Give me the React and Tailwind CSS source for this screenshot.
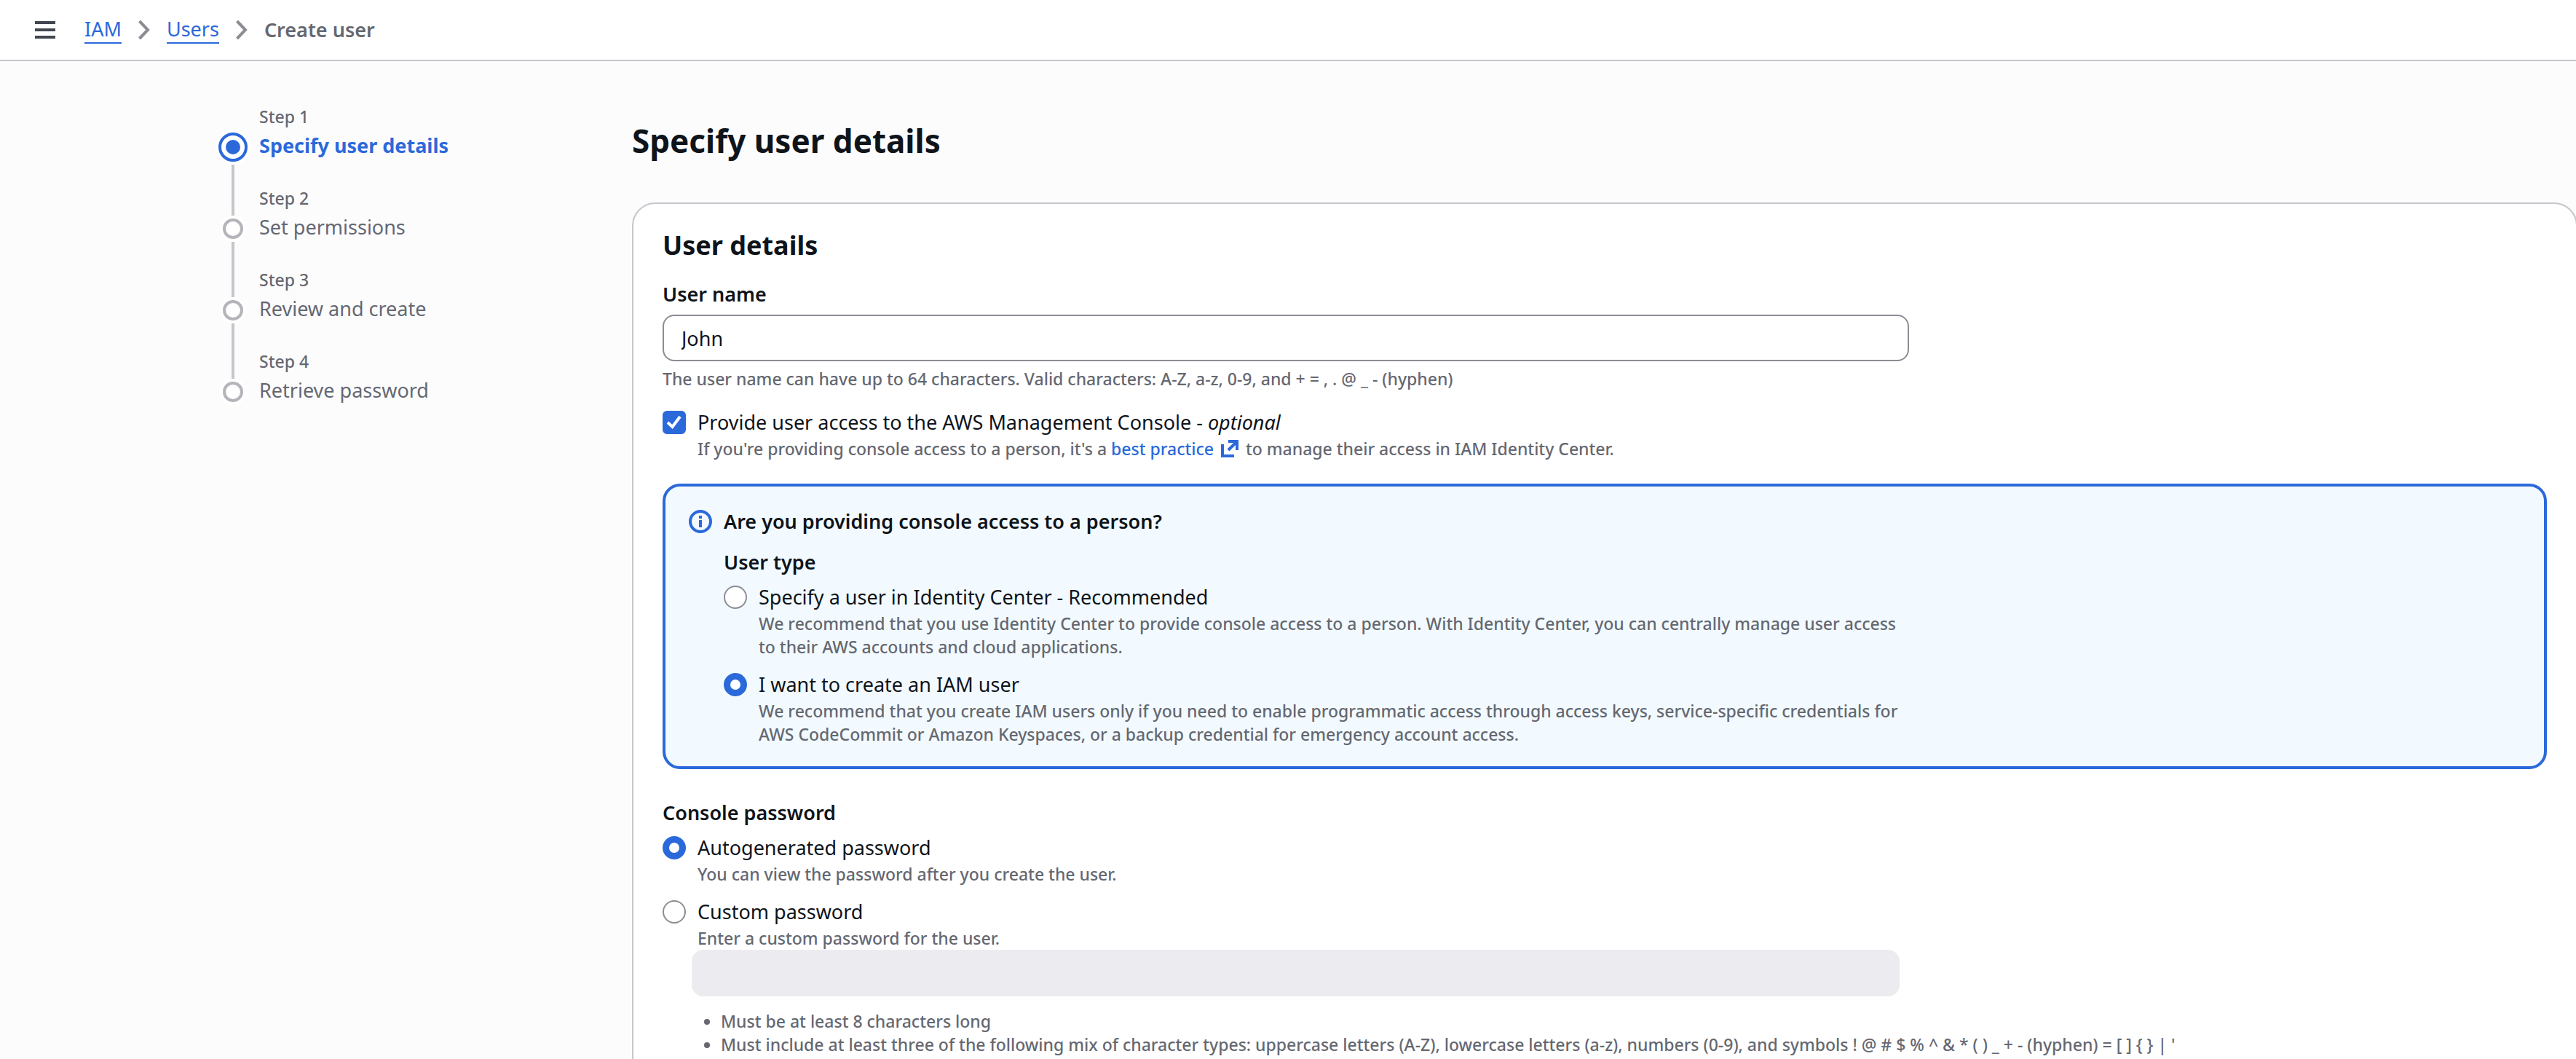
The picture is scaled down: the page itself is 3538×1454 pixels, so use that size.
import { useState } from 'react';

const steps = ['Specify user details', 'Set permissions', 'Review and create', 'Retrieve password'];

function Chevron() {
  return (
    <svg aria-hidden="true" viewBox="0 0 16 28" className="h-7 w-4" fill="none" stroke="#8c8c94" strokeWidth="4">
      <path d="M1.500 2 L13 14 L1.500 26" />
    </svg>
  );
}

function Step({ index, title, active, last }) {
  return (
    <li className="flex h-28">
      <div className="flex w-10 flex-col items-center gap-1">
        {active ? (
          <>
            <span className="h-[34px]" />
            <span className="flex size-10 shrink-0 items-center justify-center rounded-full border-4 border-[#2b69db] bg-white ring-4 ring-white">
              <span className="size-5 rounded-full bg-[#2b69db]" />
            </span>
          </>
        ) : (
          <>
            <span className="h-10 w-1 bg-[#c6c6cd]" />
            <span className="size-7 shrink-0 rounded-full border-4 border-[#b4b4bb] bg-white ring-4 ring-white" />
          </>
        )}
        {!last && <span className="w-1 flex-1 bg-[#c6c6cd]" />}
      </div>
      <div className="ml-4 flex flex-col">
        <span className="text-[23px] leading-8 font-medium text-[#656871]">Step {index}</span>
        {active ? (
          <a href="#step" aria-current="step" className="text-[27px] leading-[48px] font-bold text-[#2b69db]">{title}</a>
        ) : (
          <span className="text-[27px] leading-[48px] text-[#656871]">{title}</span>
        )}
      </div>
    </li>
  );
}

function RadioOption({ id, name, label, description, checked, onChange }) {
  return (
    <div className="flex gap-4">
      <input
        id={id}
        type="radio"
        name={name}
        checked={checked}
        onChange={onChange}
        className="mt-1 size-8 shrink-0 appearance-none rounded-full border-2 border-[#8c8c94] bg-white checked:border-[9px] checked:border-[#2b69db]"
      />
      <label htmlFor={id} className="block">
        <span className="block text-[27px] leading-10">{label}</span>
        <span className="block text-[23px] leading-8 font-medium text-[#656871]">{description}</span>
      </label>
    </div>
  );
}

export default function App() {
  const [userName, setUserName] = useState('John');
  const [consoleAccess, setConsoleAccess] = useState(true);
  const [userType, setUserType] = useState('iam');
  const [passwordType, setPasswordType] = useState('auto');

  return (
    <div className="flex h-screen flex-col overflow-hidden bg-[#fcfcfd] font-['Noto_Sans','Open_Sans',sans-serif] font-[450] text-[#0f141a]">
      <header className="flex h-[84px] shrink-0 items-center border-b-2 border-[#c6c6cd] bg-white pl-12">
        <button type="button" aria-label="Open navigation" className="mr-10 flex w-7 flex-col gap-1.5">
          <span className="h-1 bg-[#424650]" />
          <span className="h-1 bg-[#424650]" />
          <span className="h-1 bg-[#424650]" />
        </button>
        <nav aria-label="Breadcrumb">
          <ol className="flex items-center gap-[23px] text-[27px] leading-9">
            <li><a href="#iam" className="block border-b-2 border-[#2b69db] text-[#2b69db]">IAM</a></li>
            <li><Chevron /></li>
            <li><a href="#users" className="block border-b-2 border-[#2b69db] text-[#2b69db]">Users</a></li>
            <li><Chevron /></li>
            <li aria-current="page" className="font-semibold text-[#656871]">Create user</li>
          </ol>
        </nav>
      </header>

      <div className="flex flex-1">
        <nav aria-label="Steps" className="w-[868px] shrink-0 pt-[60px] pl-[300px]">
          <ol>
            {steps.map((title, i) => (
              <Step key={title} index={i + 1} title={title} active={i === 0} last={i === steps.length - 1} />
            ))}
          </ol>
        </nav>

        <main className="-mr-0.5 min-w-0 flex-1 pt-20">
          <h1 className="text-[44px] leading-[58px] font-bold">Specify user details</h1>

          <section className="mt-14 rounded-[32px] border-2 border-[#c6c6cd] bg-white px-10 pt-8 pb-20">
            <h2 className="text-[36px] leading-[50px] font-bold">User details</h2>

            <label htmlFor="user-name" className="mt-[22px] block text-[27px] leading-10 font-semibold">User name</label>
            <input
              id="user-name"
              type="text"
              value={userName}
              onChange={(e) => setUserName(e.target.value)}
              className="mt-2 block h-16 w-full max-w-[1712px] rounded-2xl border-2 border-[#8c8c94] bg-white px-6 text-[27px] outline-none"
            />
            <p className="mt-2 text-[23px] leading-8 font-medium text-[#656871]">
              The user name can have up to 64 characters. Valid characters: A-Z, a-z, 0-9, and + = , . @ _ - (hyphen)
            </p>

            <div className="mt-6 flex gap-4">
              <span className="mt-1 grid size-8 shrink-0">
                <input
                  id="console-access"
                  type="checkbox"
                  checked={consoleAccess}
                  onChange={(e) => setConsoleAccess(e.target.checked)}
                  className="col-start-1 row-start-1 size-8 appearance-none rounded-md border-2 border-[#8c8c94] bg-white checked:border-[#2b69db] checked:bg-[#2b69db]"
                />
                <svg aria-hidden="true" viewBox="0 0 32 32" className="pointer-events-none col-start-1 row-start-1 size-8" fill="none" stroke="#fff" strokeWidth="4">
                  <path d="M7 16 L13.500 22 L24 8" />
                </svg>
              </span>
              <div>
                <label htmlFor="console-access" className="block text-[27px] leading-10">
                  Provide user access to the AWS Management Console - <em>optional</em>
                </label>
                <p className="text-[23px] leading-8 font-medium text-[#656871]">
                  If you're providing console access to a person, it's a{' '}
                  <a href="#best-practice" className="text-[#2b69db]">
                    best practice
                    <svg aria-hidden="true" viewBox="0 0 24 24" className="mr-1 ml-2.5 inline-block size-6 align-[-3px]" fill="none" stroke="currentColor" strokeWidth="4">
                      <path d="M2 6 V22 H18" />
                      <path d="M10 2 H22 V14" />
                      <path d="M22 2 L10 14" />
                    </svg>
                  </a>{' '}
                  to manage their access in IAM Identity Center.
                </p>
              </div>
            </div>

            <div className="mt-8 flex gap-4 rounded-3xl border-4 border-[#2b69db] bg-[#f2faff] px-8 py-7">
              <svg aria-hidden="true" viewBox="0 0 32 32" className="mt-1 size-8 shrink-0" fill="none" stroke="#2b69db" strokeWidth="4">
                <circle cx="16" cy="16" r="14" />
                <path d="M16 8 V12 M16 14 V24" />
              </svg>
              <div className="max-w-[1624px]">
                <h3 className="text-[27px] leading-10 font-semibold">Are you providing console access to a person?</h3>
                <fieldset className="mt-4">
                  <legend className="text-[27px] leading-10 font-semibold">User type</legend>
                  <div className="mt-2 flex flex-col gap-4">
                    <RadioOption
                      id="type-center"
                      name="user-type"
                      label="Specify a user in Identity Center - Recommended"
                      description="We recommend that you use Identity Center to provide console access to a person. With Identity Center, you can centrally manage user access to their AWS accounts and cloud applications."
                      checked={userType === 'center'}
                      onChange={() => setUserType('center')}
                    />
                    <RadioOption
                      id="type-iam"
                      name="user-type"
                      label="I want to create an IAM user"
                      description="We recommend that you create IAM users only if you need to enable programmatic access through access keys, service-specific credentials for AWS CodeCommit or Amazon Keyspaces, or a backup credential for emergency account access."
                      checked={userType === 'iam'}
                      onChange={() => setUserType('iam')}
                    />
                  </div>
                </fieldset>
              </div>
            </div>

            <fieldset className="mt-10">
              <legend className="text-[27px] leading-10 font-semibold">Console password</legend>
              <div className="mt-2 flex flex-col gap-4">
                <RadioOption
                  id="password-auto"
                  name="password-type"
                  label="Autogenerated password"
                  description="You can view the password after you create the user."
                  checked={passwordType === 'auto'}
                  onChange={() => setPasswordType('auto')}
                />
                <RadioOption
                  id="password-custom"
                  name="password-type"
                  label="Custom password"
                  description="Enter a custom password for the user."
                  checked={passwordType === 'custom'}
                  onChange={() => setPasswordType('custom')}
                />
              </div>
              <input
                type="password"
                aria-label="Custom password"
                disabled={passwordType !== 'custom'}
                className="ml-10 block h-16 w-full max-w-[1659px] rounded-2xl bg-[#ebebf0] px-6 text-[27px]"
              />
              <ul className="mt-[18px] ml-20 list-disc text-[23px] leading-8 font-medium text-[#656871]">
                <li>Must be at least 8 characters long</li>
                <li>
                  {"Must include at least three of the following mix of character types: uppercase letters (A-Z), lowercase letters (a-z), numbers (0-9), and symbols ! @ # $ % ^ & * ( ) _ + - (hyphen) = [ ] { } | '"}
                </li>
              </ul>
            </fieldset>
          </section>
        </main>
      </div>
    </div>
  );
}
